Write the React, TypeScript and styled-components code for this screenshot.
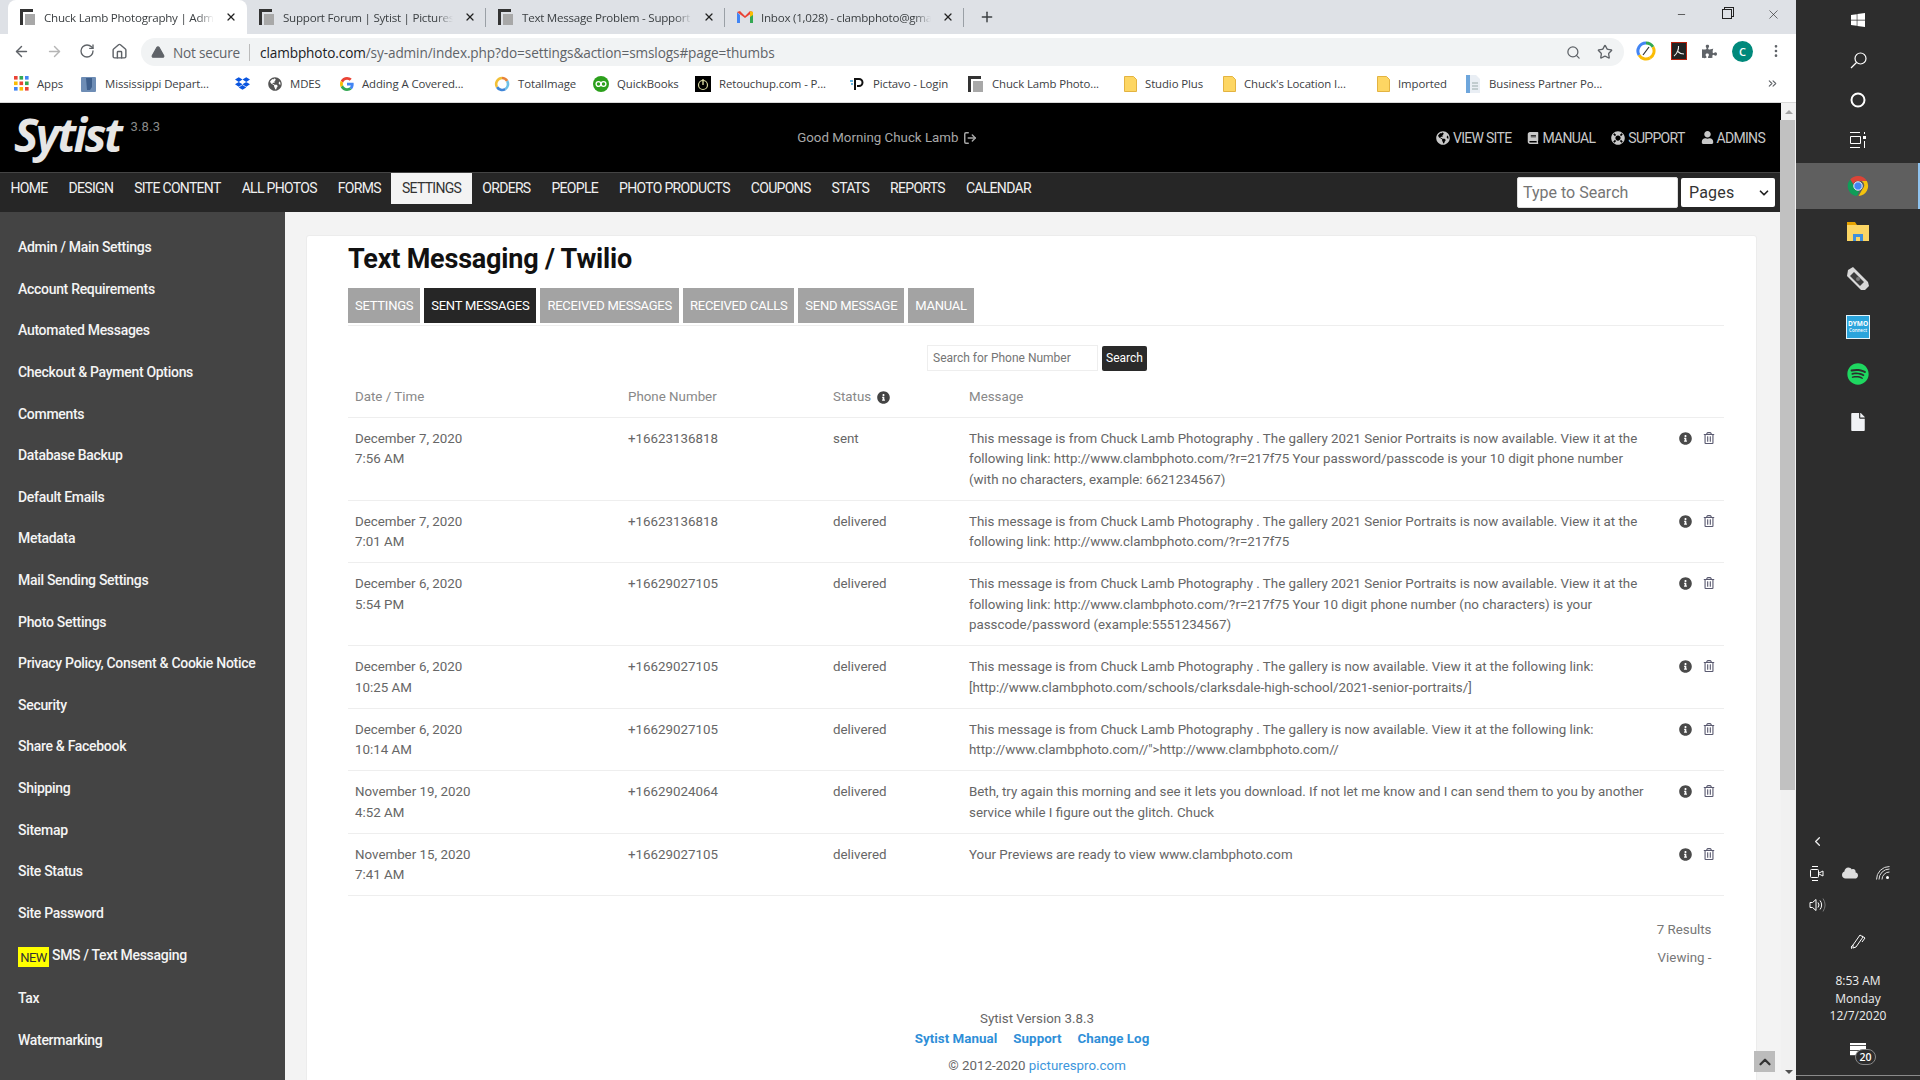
import React from 'react';
import styled, { createGlobalStyle } from 'styled-components';
import { ArrowLeft, ArrowRight, RotateCw, Home, Search as SearchIcon, Star, Plus, X, Minus, TriangleAlert, ChevronDown, ChevronUp, ChevronLeft, ChevronsRight, EllipsisVertical, LogOut } from 'lucide-react';
import { FaGlobeAmericas, FaBook, FaLifeRing, FaUser, FaInfoCircle, FaRegTrashAlt, FaPuzzlePiece, FaDropbox, FaSpotify, FaWindows, FaCloud, FaFile } from 'react-icons/fa';

const Global = createGlobalStyle`
  html, body { margin: 0; padding: 0; height: 1080px; overflow: hidden; background: #2d2d2d; }
  * { box-sizing: border-box; }
  body { font-family: Roboto, "Liberation Sans", sans-serif; }
`;

const Desktop = styled.div`display: flex; width: 1920px; height: 1080px; overflow: hidden;`;
const Browser = styled.div`display: flex; flex-direction: column; width: 1796px; height: 1080px; background: #fff;`;

const TabStrip = styled.div`display: flex; align-items: center; height: 34px; background: #dee1e6; padding-left: 8px; flex: none; position: relative;`;
const Tab = styled.div<{ $active?: boolean; $sep?: boolean }>`
  width: 239px; height: 34px; padding-left: 12px; display: flex; align-items: center; gap: 8px; position: relative; flex: none;
  background: ${p => (p.$active ? '#fff' : 'transparent')};
  border-radius: 8px 8px 0 0;
  ${p => p.$sep && `&::after { content: ''; position: absolute; right: 0; top: 8px; height: 19px; width: 1px; background: #9aa0a6; }`}
`;
const TabTitle = styled.span`
  width: 170px; white-space: nowrap; overflow: hidden; font: 11.6px "Open Sans", sans-serif; color: #3c4043; letter-spacing: -0.25px;
  -webkit-mask-image: linear-gradient(90deg, #000 90%, transparent);
  mask-image: linear-gradient(90deg, #000 90%, transparent);
`;
const TabClose = styled.span`display: flex; color: #222; margin-left: 3px;`;
const NewTab = styled.span`display: flex; margin-left: 15px; color: #3c4043;`;
const WindowControls = styled.div`
  margin-left: auto; display: grid; grid-template-columns: repeat(3, 46px); justify-items: center; align-items: center; margin-top: -6px; color: #222;
`;
const RestoreGlyph = styled.span`width: 10px; height: 10px; border: 1px solid #222; box-shadow: 2px -2px 0 -1px #dee1e6, 2px -2px 0 0 #222;`;

const Toolbar = styled.div`display: flex; align-items: center; height: 34px; background: #fff; flex: none;`;
const NavButtons = styled.div`display: flex; align-items: center; width: 141px; padding-left: 13px; gap: 16px; color: #5f6368;`;
const Omnibox = styled.div`width: 1483px; height: 28px; margin-top: 2px; border-radius: 14px; background: #f1f3f4; display: flex; align-items: center; padding: 0 10px; color: #5f6368; font: 13.6px "Open Sans", sans-serif; flex: none;`;
const NotSecure = styled.span`margin-left: 8px; letter-spacing: -0.2px; color: #5f6368; width: 77px; height: 17px; border-right: 1px solid #bbb; line-height: 17px; margin-right: 10px; white-space: nowrap;`;
const Url = styled.span`color: #5f6368; letter-spacing: -0.1px; b { font-weight: 400; color: #202124; }`;
const OmniRight = styled.div`margin-left: auto; display: flex; align-items: center; gap: 16px; padding-right: 1px; color: #5f6368;`;
const ToolIcons = styled.div`display: flex; align-items: center; gap: 15px; padding-left: 12px; color: #5f6368;`;
const Avatar = styled.span`width: 21px; height: 21px; border-radius: 50%; background: #00897b; color: #fff; font: 600 11px "Open Sans", sans-serif; display: flex; align-items: center; justify-content: center;`;

const Bookmarks = styled.div`display: flex; align-items: center; height: 35px; padding: 0 0 3px 14px; border-bottom: 1px solid #d8d8d8; flex: none; position: relative;`;
const Bookmark = styled.div<{ $w: number }>`width: ${p => p.$w}px; flex: none; display: flex; align-items: center; gap: 8px; font: 11.4px "Open Sans", sans-serif; letter-spacing: -0.1px; color: #3c4043; white-space: nowrap;`;
const MoreMarks = styled.span`display: flex; color: #5f6368; margin-left: 141px;`;

const Viewport = styled.div`flex: 1; display: flex; min-height: 0;`;
const Page = styled.div`width: 1781px; display: flex; flex-direction: column; background: #f3f3f3; position: relative; overflow: hidden;`;
const Scrollbar = styled.div`width: 15px; background: #f1f1f1; display: flex; flex-direction: column; align-items: center; position: relative;`;
const ScrollArrow = styled.span<{ $dir: 'up' | 'down' }>`
  flex: none; width: 0; height: 0; margin: 7px 0 6px; border-left: 4px solid transparent; border-right: 4px solid transparent;
  ${p => (p.$dir === 'up' ? 'border-bottom: 4px solid #a3a3a3;' : 'border-top: 4px solid #505050;')}
`;
const ScrollThumb = styled.div`width: 100%; height: 670px; background: #c1c1c1; margin-right: 2px;`;
const ScrollSpacer = styled.div`flex: 1;`;

const Header = styled.header`height: 69px; background: #000; display: flex; align-items: center; flex: none; padding: 0 16px 0 14px;`;
const Logo = styled.span`font: italic 700 46px "Open Sans", sans-serif; color: #e6e6e6; letter-spacing: -2.5px; line-height: 44px; margin-top: -8px;`;
const Version = styled.span`font-size: 13px; color: #8a8a8a; margin: -22px 0 0 10px; letter-spacing: 0.2px;`;
const Greeting = styled.span`display: flex; align-items: center; gap: 5px; font-size: 13.3px; color: #a8a8a8; margin-left: 637px;`;
const HeaderLinks = styled.nav`margin-left: auto; display: flex; gap: 16px;`;
const HeaderLink = styled.span`display: flex; align-items: center; gap: 3px; font-size: 14px; color: #c8c8c8; letter-spacing: -0.7px;`;

const NavBar = styled.nav`height: 40px; background: #262626; border-top: 1px solid #444; display: flex; align-items: flex-start; flex: none; padding-left: 0; position: relative;`;
const NavItem = styled.span<{ $active?: boolean }>`
  height: 31px; line-height: 31px; padding: 0 10.5px; font-size: 14px; letter-spacing: -0.69px; white-space: nowrap;
  background: ${p => (p.$active ? '#f3f3f3' : 'transparent')};
  color: ${p => (p.$active ? '#333' : '#f0f0f0')};
`;
const NavSearch = styled.div`margin-left: auto; margin-right: 6px; display: flex; align-items: center; gap: 3px; margin-top: 4px;`;
const SearchInput = styled.div`width: 161px; height: 31px; background: #fff; border: 1px solid #ddd; border-radius: 2px; font-size: 16px; color: #757575; padding-left: 5px; line-height: 29px;`;
const PagesSelect = styled.div`width: 94px; height: 29px; background: #fff; border-radius: 2px; font-size: 16px; color: #333; padding: 0 4px 0 8px; display: flex; align-items: center; justify-content: space-between; letter-spacing: 0.2px;`;

const Main = styled.div`flex: 1; display: flex; min-height: 0;`;
const Sidebar = styled.aside`width: 285px; background: #444; padding-top: 14.4px; flex: none;`;
const SideItem = styled.div<{ $tall?: boolean }>`
  height: ${p => (p.$tall ? '44px' : '41.6px')}; display: flex; align-items: center; padding-left: 18px;
  font-size: 14px; font-weight: 500; letter-spacing: -0.3px; color: #f4f4f4; white-space: nowrap;
`;
const NewBadge = styled.span`background: #ff0; color: #333; font-size: 13px; font-weight: 400; width: 31px; height: 20px; line-height: 21px; text-align: center; margin: 3px 3px 0 0; letter-spacing: -0.5px;`;

const Content = styled.main`flex: 1; padding: 23px 24px 0 21px; min-width: 0;`;
const Card = styled.section`height: 900px; background: #fff; border: 1px solid #ececec; border-radius: 3px; padding: 0 32px 0 41px;`;
const Title = styled.h1`margin: 0; height: 52px; font-size: 27px; font-weight: 700; color: #111; line-height: 46px; letter-spacing: -0.2px;`;
const Tabs = styled.div`display: flex; gap: 4px; height: 38px; border-bottom: 1px solid #eee; align-items: flex-start;`;
const TabButton = styled.span<{ $active?: boolean }>`
  height: 35px; line-height: 35px; padding: 0 7px; font-size: 13px; letter-spacing: -0.25px; white-space: nowrap;
  color: #fff; background: ${p => (p.$active ? '#262626' : '#a3a3a3')};
`;
const PhoneSearch = styled.div`display: flex; justify-content: center; gap: 4px; margin-top: 18px; padding-left: 2px; height: 28px; align-items: center;`;
const PhoneInput = styled.div`width: 171px; height: 26px; border: 1px solid #eee; font-size: 12px; color: #757575; line-height: 24px; padding-left: 5px;`;
const PhoneButton = styled.span`width: 45px; height: 25px; background: #2a2a2a; color: #fff; font-size: 12px; text-align: center; line-height: 25px; border-radius: 2px;`;

const Table = styled.div`margin-top: 9px;`;
const columns = `273px 205px 136px 710px 1fr`;
const HeadRow = styled.div`display: grid; grid-template-columns: ${columns}; padding: 6px 0 0 7px; height: 36.5px; border-bottom: 1px solid #eee; font-size: 13.33px; line-height: 20px;`;
const HeadCell = styled.span`display: flex; align-items: center; gap: 6px; height: 20px; color: #888;`;
const Row = styled.div`display: grid; grid-template-columns: ${columns}; padding: 11.2px 0 9.6px 7px; border-bottom: 1px solid #eee; font-size: 13.33px; line-height: 20.4px; color: #666;`;
const Message = styled.div`width: 682px;`;
const RowIcons = styled.div`display: flex; gap: 11px; padding-top: 3px; height: 20px; color: #4a4a4a;`;
const TrashWrap = styled.span`color: #5a5a70; display: flex;`;
const Results = styled.div`text-align: right; padding-right: 12.5px; margin-top: 24px; font-size: 13.33px; color: #777; line-height: 20px;`;
const Viewing = styled.div`margin-top: 8px;`;
const Footer = styled.footer`text-align: center; margin-top: 41px; padding-left: 2px; font-size: 13.33px; color: #666; line-height: 20px;`;
const FootLinks = styled.div`display: flex; justify-content: center; gap: 16px; font-weight: 700; color: #2f8fd8; margin-right: 10px; letter-spacing: 0.05px;`;
const Copyright = styled.div`margin-top: 7px; a { color: #3c96dc; text-decoration: none; }`;
const ToTop = styled.span`position: absolute; right: 6px; bottom: 8px; width: 21px; height: 21px; background: #bcbcbc; color: #333; display: flex; align-items: center; justify-content: center;`;

const Taskbar = styled.aside`width: 124px; height: 1080px; background: #2d2d2d; display: flex; flex-direction: column; align-items: stretch; color: #fff; flex: none; position: relative;`;
const TaskSlot = styled.div<{ $h: number; $active?: boolean }>`
  height: ${p => p.$h}px; display: flex; align-items: center; justify-content: center; flex: none;
  ${p => p.$active && `background: #5f5f5f; border-right: 2px solid #90c4f0; padding-left: 2px;`}
`;
const TaskViewSlot = styled(TaskSlot)`padding-bottom: 4px;`;
const Dymo = styled.span`width: 24px; height: 24px; background: #2aa4dc; border: 1px solid #e4f4fb; color: #fff; display: flex; flex-direction: column; align-items: center; justify-content: center; font: 700 6.5px/7px "Open Sans", sans-serif;
  small { font-size: 4.5px; line-height: 6px; font-weight: 600; }
`;
const Tray = styled.div`margin-top: 380px; display: grid; grid-template-columns: 32px 33px 33px; padding-left: 5px; grid-auto-rows: 32px; align-items: center; justify-items: center;`;
const TrayChevron = styled.span`grid-column: 1 / 4; justify-self: start; margin-left: 9px; display: flex;`;
const Pen = styled.div`display: flex; justify-content: center; margin-top: 2px; height: 36px; align-items: center;`;
const Clock = styled.div`text-align: center; font: 12px/17.5px "Open Sans", sans-serif; color: #eee; margin-top: 13px;`;
const Notify = styled.div`margin-top: 18px; display: flex; justify-content: center; position: relative; height: 26px;`;
const NotifyBox = styled.span`width: 16px; height: 13px; display: block; background: repeating-linear-gradient(180deg, #fff 0 2px, #555 2px 3px, #fff 3px 5px);`;
const NotifyCount = styled.span`position: absolute; left: 59px; top: 6px; width: 21px; height: 16px; border: 1px solid #888; border-radius: 9px; background: #2d2d2d; font: 600 10.5px/14px "Open Sans", sans-serif; text-align: center; color: #fff;`;
const TaskLine = styled.div`position: absolute; left: 0; right: 0; bottom: 4px; height: 1px; background: #8a8a8a;`;

const Fav = () => (
  <svg width="16" height="16" viewBox="0 0 16 16"><path d="M0 0h13v3H3v13H0z" fill="#333" /><rect x="5" y="5" width="10" height="11" fill="#a8a8a8" /></svg>
);
const Gmail = () => (
  <svg width="16" height="14" viewBox="0 0 16 14"><path d="M0 2v11h3V5z" fill="#4285f4" /><path d="M16 2v11h-3V5z" fill="#34a853" /><path d="M0 2l3-1 5 5 5-5 3 1-8 6z" fill="#ea4335" /><path d="M13 1l3 1v3l-3 2z" fill="#fbbc04" /></svg>
);
const Chrome = ({ s = 24 }: { s?: number }) => (
  <svg width={s} height={s} viewBox="0 0 24 24">
    <path d="M12 1a11 11 0 0 1 9.600 5.500H12a5.500 5.500 0 0 0-5 3.200L3.400 5A11 11 0 0 1 12 1z" fill="#db4437" />
    <path d="M21.600 6.500A11 11 0 0 1 12.600 23l4.200-7.500a5.500 5.500 0 0 0-.6-9z" fill="#f4c20d" />
    <path d="M3.400 5l4.400 7.600a5.500 5.500 0 0 0 5.600 4.800L11 23A11 11 0 0 1 3.400 5z" fill="#0f9d58" />
    <circle cx="12" cy="12" r="4.600" fill="#4285f4" stroke="#fff" strokeWidth="1" />
  </svg>
);
const AppsGrid = () => (
  <svg width="15" height="15" viewBox="0 0 15 15">
    {[['#ea4335', '#34a853', '#4285f4'], ['#fbbc04', '#ea4335', '#34a853'], ['#4285f4', '#fbbc04', '#ea4335']].map((r, y) =>
      r.map((c, x) => <rect key={`${x}${y}`} x={x * 5.5} y={y * 5.5} width="3.6" height="3.6" fill={c} />)
    )}
  </svg>
);
const MapIcon = () => (
  <svg width="16" height="16" viewBox="0 0 16 16"><rect x="0" y="1" width="15" height="15" rx="1" fill="#6e8db5" /><path d="M5 2h6v9l-2 3H6z" fill="#3e5f8c" /></svg>
);
const GlobeMark = () => <FaGlobeAmericas size={14} color="#555" />;
const GoogleG = () => (
  <svg width="14" height="14" viewBox="0 0 48 48">
    <path fill="#EA4335" d="M24 9.500c3.500 0 6.700 1.200 9.200 3.600l6.900-6.900C35.900 2.400 30.400 0 24 0 14.600 0 6.500 5.400 2.600 13.200l8 6.200C12.500 13.600 17.800 9.500 24 9.500z" />
    <path fill="#4285F4" d="M46.900 24.500c0-1.600-.1-3.100-.4-4.500H24v9h12.900c-.6 3-2.200 5.500-4.800 7.200l7.700 6c4.500-4.200 7.100-10.300 7.100-17.700z" />
    <path fill="#FBBC05" d="M10.600 28.600c-.5-1.400-.8-3-.8-4.600s.3-3.200.8-4.600l-8-6.200C.9 16.500 0 20.100 0 24s.9 7.500 2.600 10.800z" />
    <path fill="#34A853" d="M24 48c6.500 0 11.900-2.100 15.900-5.800l-7.700-6c-2.200 1.400-4.900 2.300-8.200 2.300-6.200 0-11.500-4.200-13.400-9.800l-8 6.200C6.500 42.600 14.600 48 24 48z" />
  </svg>
);
const RingMark = () => (
  <svg width="16" height="16" viewBox="0 0 16 16" fill="none" strokeWidth="2.600">
    <path d="M8 2a6 6 0 0 1 5.200 3" stroke="#e8833a" /><path d="M13.200 5a6 6 0 0 1-2 8.100" stroke="#6cc0e8" /><path d="M11.200 13.100A6 6 0 0 1 3 11" stroke="#3f86d8" /><path d="M3 11a6 6 0 0 1 5-9" stroke="#f2c037" />
  </svg>
);
const QBMark = () => (
  <svg width="16" height="16" viewBox="0 0 16 16"><circle cx="8" cy="8" r="8" fill="#2ca01c" /><circle cx="5.500" cy="8" r="2.400" fill="none" stroke="#fff" strokeWidth="1.300" /><circle cx="10.500" cy="8" r="2.400" fill="none" stroke="#fff" strokeWidth="1.300" /></svg>
);
const RetouchMark = () => (
  <svg width="16" height="16" viewBox="0 0 16 16"><rect width="16" height="16" fill="#000" /><circle cx="8" cy="9" r="4.500" fill="none" stroke="#d8d8a0" strokeWidth="1.200" /><path d="M8 3v6" stroke="#d8d8a0" strokeWidth="1.400" /></svg>
);
const PictavoMark = () => (
  <svg width="16" height="16" viewBox="0 0 16 16" fill="none"><path d="M6 14V3h4a3.500 3.500 0 0 1 0 7H8" stroke="#111" strokeWidth="2" /><path d="M1 5h3M2 8h2" stroke="#3aa0d8" strokeWidth="1.500" /></svg>
);
const FolderMark = () => (
  <svg width="13" height="16" viewBox="0 0 13 16"><path d="M.5.500h9l3 3v12H.5z" fill="#fdd663" stroke="#e3b341" /></svg>
);
const DocMark = () => (
  <svg width="16" height="18" viewBox="0 0 16 18"><path d="M1 0h10l4 4v14H1z" fill="#e9eef4" /><rect x="1" y="0" width="4" height="18" fill="#6ea6dc" /><path d="M7 8h6M7 11h6M7 14h6" stroke="#9aa" /></svg>
);
const ColorRing = () => (
  <svg width="20" height="20" viewBox="0 0 20 20" fill="none" strokeWidth="3">
    <path d="M10 2a8 8 0 0 1 7 4" stroke="#34a853" /><path d="M17 6a8 8 0 0 1-3 10.900" stroke="#fbbc04" /><path d="M14 16.900A8 8 0 0 1 3 14" stroke="#fbbc04" /><path d="M3 14a8 8 0 0 1 7-12" stroke="#4285f4" /><path d="M7 14l6-8" stroke="#333" strokeWidth="1.200" />
  </svg>
);
const PdfMark = () => (
  <svg width="16" height="18" viewBox="0 0 16 18"><rect x=".5" y=".5" width="15" height="17" fill="#222" stroke="#b5200d" /><path d="M3 14c3-2 5-7 4.500-10M6 9c2 2 4 3 7 3" stroke="#eee" strokeWidth="1.100" fill="none" /></svg>
);
const TaskViewIcon = () => (
  <svg width="18" height="18" viewBox="0 0 18 18" fill="none" stroke="#fff"><path d="M1 1.500h10M1 16.500h10M1.500 5.500h10v7h-10z" /><rect x="14" y="5" width="3" height="3" fill="#fff" stroke="none" /><path d="M15.500 1v2M15.500 10v7" /></svg>
);
const SearchGlyph = () => (
  <svg width="17" height="17" viewBox="0 0 17 17" fill="none" stroke="#fff" strokeWidth="1.200"><circle cx="10.500" cy="6.500" r="5.500" /><path d="M6.500 10.500L1 16" /></svg>
);
const DeviceIcon = () => (
  <svg width="26" height="26" viewBox="0 0 26 26"><path d="M8 1l15 15 1 4-4 4-4 0L2 10 3 4z" fill="#d9d9d9" /><path d="M9 6l10 10-4 4L5 10z" fill="#3c3c3c" /><circle cx="13" cy="13" r="2" fill="#777" /></svg>
);
const FolderIcon = () => (
  <svg width="22" height="20" viewBox="0 0 22 20"><path d="M0 0h8l2 3H0z" fill="#e6a200" /><rect y="3" width="22" height="16" fill="#fbd564" /><path d="M6 19v-7h10v7h-3v-4H9v4z" fill="#3f8fdc" /></svg>
);
const MeetIcon = () => (
  <svg width="14" height="17" viewBox="0 0 14 17" fill="none" stroke="#fff"><path d="M2 1.500h6M2 15.500h6" /><rect x=".5" y="4.500" width="8" height="8" rx="1" /><path d="M9 8l4-2v5L9 9" /></svg>
);
const WifiIcon = () => (
  <svg width="14" height="14" viewBox="0 0 14 14" fill="none" stroke="#ddd"><path d="M.5 13.500a13 13 0 0 1 13-13M3 13.500a10.500 10.500 0 0 1 10.500-10.500M6 13.500a7.500 7.500 0 0 1 7.500-7.500" /><circle cx="11.500" cy="11.500" r="1.500" fill="#fff" stroke="none" /></svg>
);
const VolumeIcon = () => (
  <svg width="17" height="14" viewBox="0 0 17 14" fill="none" stroke="#fff"><path d="M1 4.500h2.500L7 1.500v11l-3.500-3H1z" /><path d="M9 4.500a4 4 0 0 1 0 5M11 2.500a7 7 0 0 1 0 9" /><path d="M14 .5a12 12 0 0 1 0 13" stroke="#777" /></svg>
);
const PenIcon = () => (
  <svg width="17" height="17" viewBox="0 0 17 17" fill="none" stroke="#fff"><path d="M3 12L10 2l3 2-7 10-3 1z" /><path d="M12 3l3 2-3 4M3 12c-2 1-2 3-1 4" /></svg>
);

const bookmarks: { w: number; label?: string; icon: React.ReactNode }[] = [
  { w: 67, label: 'Apps', icon: <AppsGrid /> },
  { w: 154, label: 'Mississippi Depart...', icon: <MapIcon /> },
  { w: 33, icon: <FaDropbox size={15} color="#0a55e0" /> },
  { w: 72, label: 'MDES', icon: <GlobeMark /> },
  { w: 154, label: 'Adding A Covered...', icon: <GoogleG /> },
  { w: 99, label: 'TotalImage', icon: <RingMark /> },
  { w: 102, label: 'QuickBooks', icon: <QBMark /> },
  { w: 154, label: 'Retouchup.com - P...', icon: <RetouchMark /> },
  { w: 119, label: 'Pictavo - Login', icon: <PictavoMark /> },
  { w: 156, label: 'Chuck Lamb Photo...', icon: <Fav /> },
  { w: 99, label: 'Studio Plus', icon: <FolderMark /> },
  { w: 154, label: "Chuck's Location I...", icon: <FolderMark /> },
  { w: 88, label: 'Imported', icon: <FolderMark /> },
  { w: 160, label: 'Business Partner Po...', icon: <DocMark /> },
];

const navItems = ['HOME', 'DESIGN', 'SITE CONTENT', 'ALL PHOTOS', 'FORMS', 'SETTINGS', 'ORDERS', 'PEOPLE', 'PHOTO PRODUCTS', 'COUPONS', 'STATS', 'REPORTS', 'CALENDAR'];
const sideItems = ['Admin / Main Settings', 'Account Requirements', 'Automated Messages', 'Checkout & Payment Options', 'Comments', 'Database Backup', 'Default Emails', 'Metadata', 'Mail Sending Settings', 'Photo Settings', 'Privacy Policy, Consent & Cookie Notice', 'Security', 'Share & Facebook', 'Shipping', 'Sitemap', 'Site Status', 'Site Password'];
const subTabs = ['SETTINGS', 'SENT MESSAGES', 'RECEIVED MESSAGES', 'RECEIVED CALLS', 'SEND MESSAGE', 'MANUAL'];
const rows = [
  ['December 7, 2020', '7:56 AM', '+16623136818', 'sent', 'This message is from Chuck Lamb Photography . The gallery 2021 Senior Portraits is now available. View it at the following link: http://www.clambphoto.com/?r=217f75 Your password/passcode is your 10 digit phone number (with no characters, example: 6621234567)'],
  ['December 7, 2020', '7:01 AM', '+16623136818', 'delivered', 'This message is from Chuck Lamb Photography . The gallery 2021 Senior Portraits is now available. View it at the following link: http://www.clambphoto.com/?r=217f75'],
  ['December 6, 2020', '5:54 PM', '+16629027105', 'delivered', 'This message is from Chuck Lamb Photography . The gallery 2021 Senior Portraits is now available. View it at the following link: http://www.clambphoto.com/?r=217f75 Your 10 digit phone number (no characters) is your passcode/password (example:5551234567)'],
  ['December 6, 2020', '10:25 AM', '+16629027105', 'delivered', 'This message is from Chuck Lamb Photography . The gallery is now available. View it at the following link: [http://www.clambphoto.com/schools/clarksdale-high-school/2021-senior-portraits/]'],
  ['December 6, 2020', '10:14 AM', '+16629027105', 'delivered', 'This message is from Chuck Lamb Photography . The gallery is now available. View it at the following link: http://www.clambphoto.com//">http://www.clambphoto.com//'],
  ['November 19, 2020', '4:52 AM', '+16629024064', 'delivered', 'Beth, try again this morning and see it lets you download. If not let me know and I can send them to you by another service while I figure out the glitch. Chuck'],
  ['November 15, 2020', '7:41 AM', '+16629027105', 'delivered', 'Your Previews are ready to view www.clambphoto.com'],
];

export default function App() {
  return (
    <Desktop>
      <Global />
      <Browser>
        <TabStrip>
          <Tab $active><Fav /><TabTitle>Chuck Lamb Photography | Admin</TabTitle><TabClose><X size={12} strokeWidth={2.5} /></TabClose></Tab>
          <Tab $sep><Fav /><TabTitle>Support Forum | Sytist | PicturesPro</TabTitle><TabClose><X size={12} strokeWidth={2.5} /></TabClose></Tab>
          <Tab $sep><Fav /><TabTitle>Text Message Problem - Support</TabTitle><TabClose><X size={12} strokeWidth={2.5} /></TabClose></Tab>
          <Tab $sep><Gmail /><TabTitle>Inbox (1,028) - clambphoto@gmail</TabTitle><TabClose><X size={12} strokeWidth={2.5} /></TabClose></Tab>
          <NewTab><Plus size={16} strokeWidth={2.2} /></NewTab>
          <WindowControls>
            <Minus size={11} strokeWidth={1.5} />
            <RestoreGlyph />
            <X size={15} strokeWidth={1} />
          </WindowControls>
        </TabStrip>
        <Toolbar>
          <NavButtons>
            <ArrowLeft size={17} />
            <ArrowRight size={17} color="#b5b5b5" />
            <RotateCw size={16} />
            <Home size={17} />
          </NavButtons>
          <Omnibox>
            <TriangleAlert size={14} fill="#5f6368" color="#5f6368" />
            <NotSecure>Not secure</NotSecure>
            <Url><b>clambphoto.com</b>/sy-admin/index.php?do=settings&amp;action=smslogs#page=thumbs</Url>
            <OmniRight>
              <SearchIcon size={15} />
              <Star size={16} />
            </OmniRight>
          </Omnibox>
          <ToolIcons>
            <ColorRing />
            <PdfMark />
            <FaPuzzlePiece size={15} color="#5f6368" />
            <Avatar>C</Avatar>
            <EllipsisVertical size={16} />
          </ToolIcons>
        </Toolbar>
        <Bookmarks>
          {bookmarks.map((b, i) => (
            <Bookmark key={i} $w={b.w}>{b.icon}{b.label && <span>{b.label}</span>}</Bookmark>
          ))}
          <MoreMarks><ChevronsRight size={13} /></MoreMarks>
        </Bookmarks>
        <Viewport>
          <Page>
            <Header>
              <Logo>Sytist</Logo>
              <Version>3.8.3</Version>
              <Greeting>Good Morning Chuck Lamb <LogOut size={14} strokeWidth={2.5} /></Greeting>
              <HeaderLinks>
                <HeaderLink><FaGlobeAmericas size={14} />VIEW SITE</HeaderLink>
                <HeaderLink><FaBook size={12} />MANUAL</HeaderLink>
                <HeaderLink><FaLifeRing size={14} />SUPPORT</HeaderLink>
                <HeaderLink><FaUser size={13} />ADMINS</HeaderLink>
              </HeaderLinks>
            </Header>
            <NavBar>
              {navItems.map(n => <NavItem key={n} $active={n === 'SETTINGS'}>{n}</NavItem>)}
              <NavSearch>
                <SearchInput>Type to Search</SearchInput>
                <PagesSelect>Pages <ChevronDown size={14} strokeWidth={3} color="#222" /></PagesSelect>
              </NavSearch>
            </NavBar>
            <Main>
              <Sidebar>
                {sideItems.map(s => <SideItem key={s}>{s}</SideItem>)}
                <SideItem $tall><NewBadge>NEW</NewBadge>SMS / Text Messaging</SideItem>
                <SideItem>Tax</SideItem>
                <SideItem>Watermarking</SideItem>
              </Sidebar>
              <Content>
                <Card>
                  <Title>Text Messaging / Twilio</Title>
                  <Tabs>
                    {subTabs.map(t => <TabButton key={t} $active={t === 'SENT MESSAGES'}>{t}</TabButton>)}
                  </Tabs>
                  <PhoneSearch>
                    <PhoneInput>Search for Phone Number</PhoneInput>
                    <PhoneButton>Search</PhoneButton>
                  </PhoneSearch>
                  <Table>
                    <HeadRow>
                      <HeadCell>Date / Time</HeadCell>
                      <HeadCell>Phone Number</HeadCell>
                      <HeadCell>Status <FaInfoCircle size={13} color="#444" /></HeadCell>
                      <HeadCell>Message</HeadCell>
                    </HeadRow>
                    {rows.map((r, i) => (
                      <Row key={i}>
                        <div>{r[0]}<br />{r[1]}</div>
                        <div>{r[2]}</div>
                        <div>{r[3]}</div>
                        <Message>{r[4]}</Message>
                        <RowIcons>
                          <FaInfoCircle size={13} />
                          <TrashWrap><FaRegTrashAlt size={12} /></TrashWrap>
                        </RowIcons>
                      </Row>
                    ))}
                  </Table>
                  <Results>
                    7 Results
                    <Viewing>Viewing -</Viewing>
                  </Results>
                  <Footer>
                    Sytist Version 3.8.3
                    <FootLinks><span>Sytist Manual</span><span>Support</span><span>Change Log</span></FootLinks>
                    <Copyright>© 2012-2020 <a>picturespro.com</a></Copyright>
                  </Footer>
                </Card>
              </Content>
            </Main>
            <ToTop><ChevronUp size={18} strokeWidth={3} /></ToTop>
          </Page>
          <Scrollbar>
            <ScrollArrow $dir="up" />
            <ScrollThumb />
            <ScrollSpacer />
            <ScrollArrow $dir="down" />
          </Scrollbar>
        </Viewport>
      </Browser>
      <Taskbar>
        <TaskSlot $h={40}><FaWindows size={16} /></TaskSlot>
        <TaskSlot $h={40}><SearchGlyph /></TaskSlot>
        <TaskSlot $h={40}><svg width="16" height="16" viewBox="0 0 16 16" fill="none" stroke="#fff" strokeWidth="2"><circle cx="8" cy="8" r="6.500" /></svg></TaskSlot>
        <TaskViewSlot $h={43}><TaskViewIcon /></TaskViewSlot>
        <TaskSlot $h={46} $active><Chrome s={22} /></TaskSlot>
        <TaskSlot $h={46}><FolderIcon /></TaskSlot>
        <TaskSlot $h={48}><DeviceIcon /></TaskSlot>
        <TaskSlot $h={47}><Dymo>DYMO<small>Connect</small></Dymo></TaskSlot>
        <TaskSlot $h={48}><FaSpotify size={22} color="#1ed760" /></TaskSlot>
        <TaskSlot $h={47}><FaFile size={18} color="#f0f2f5" /></TaskSlot>
        <Tray>
          <TrayChevron><ChevronLeft size={15} color="#eee" /></TrayChevron>
          <MeetIcon />
          <FaCloud size={16} color="#ddd" />
          <WifiIcon />
          <VolumeIcon />
        </Tray>
        <Pen><PenIcon /></Pen>
        <Clock>8:53 AM<br />Monday<br />12/7/2020</Clock>
        <Notify><NotifyBox /><NotifyCount>20</NotifyCount></Notify>
        <TaskLine />
      </Taskbar>
    </Desktop>
  );
}
